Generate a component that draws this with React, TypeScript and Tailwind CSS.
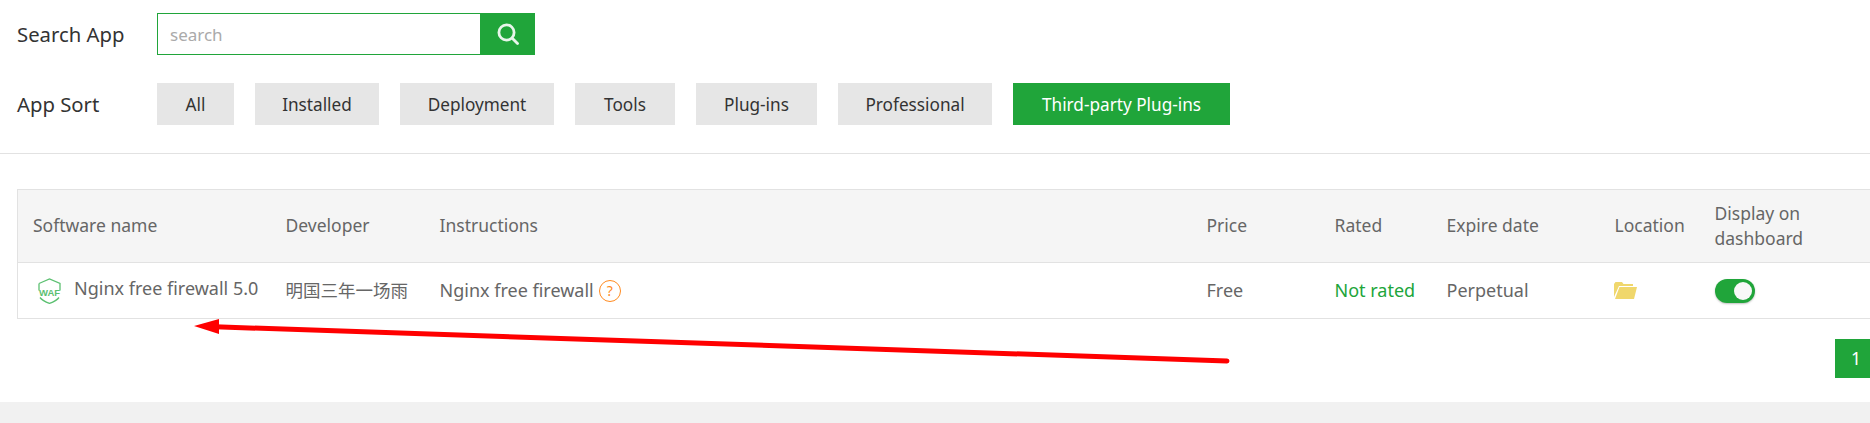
const sorts = [
  { label: "All", w: "w-[77px]" },
  { label: "Installed", w: "w-[124px]" },
  { label: "Deployment", w: "w-[154px]" },
  { label: "Tools", w: "w-[100px]" },
  { label: "Plug-ins", w: "w-[121px]" },
  { label: "Professional", w: "w-[154px]" },
];

const th = "px-[15px] pb-[1px] font-normal text-left align-middle text-[#666] leading-[25px]";
const td = "px-[15px] align-middle text-[#666] whitespace-nowrap text-[18px]";

function WafIcon() {
  return (
    <svg width="25" height="26" viewBox="0 0 25 26" className="shrink-0" fill="none">
      <path d="M2 5.5 L12.5 1 L23 5.5 V12.5" stroke="#5cc071" strokeWidth="1.3" />
      <path d="M2 5.5 V12.5" stroke="#5cc071" strokeWidth="1.3" />
      <path d="M3 19.5 Q5.5 23 12.5 25.4 Q19.5 23 22 19.5" stroke="#5cc071" strokeWidth="1.3" />
      <text x="12.5" y="18" textAnchor="middle" fontSize="9.5" fontWeight="700" fill="#5cc071" fontFamily="'Liberation Sans', sans-serif">WAF</text>
    </svg>
  );
}

function FolderIcon() {
  return (
    <svg width="23" height="17" viewBox="0 0 23 17" fill="#f0d76c" className="-ml-px">
      <path d="M0 15 V2 L1.5 0 H8 L9.5 2 H19 V4 H5 Z" />
      <path d="M5.5 5 H23 L20 17 H1 Z" />
    </svg>
  );
}

export default function App() {
  return (
    <div className="relative h-[423px] w-full overflow-hidden bg-white font-['Noto_Sans','Noto_Sans_CJK_SC',sans-serif] text-[17.5px] text-[#333]">
      <div className="h-[402px]">
        <div className="flex items-center pt-[13px] pl-[17px]">
          <span className="w-[140px] text-[20.3px]">Search App</span>
          <div className="flex h-[42px] w-[378px]">
            <input
              placeholder="search"
              className="h-full flex-1 min-w-0 border border-[#20a53a] px-3 text-[17px] outline-none placeholder:text-[#aaa]"
            />
            <button className="flex h-full w-[54px] items-center justify-center bg-[#20a53a]">
              <svg width="22" height="22" viewBox="0 0 22 22" fill="none" stroke="#e8f5ea" strokeWidth="2.8" strokeLinecap="round">
                <circle cx="9.5" cy="9.5" r="7.6" />
                <path d="M15.5 15.5 L20.5 20.5" />
              </svg>
            </button>
          </div>
        </div>

        <div className="mt-[28px] flex items-center pl-[17px]">
          <span className="w-[140px] text-[20.3px]">App Sort</span>
          <div className="flex gap-[21px] text-[17.2px]">
            {sorts.map((s) => (
              <div key={s.label} className={`flex h-[42px] items-center justify-center bg-[#e6e6e6] pt-px ${s.w}`}>
                {s.label}
              </div>
            ))}
            <div className="flex h-[42px] w-[217px] items-center justify-center bg-[#20a53a] pt-px text-white">
              Third-party Plug-ins
            </div>
          </div>
        </div>

        <div className="mt-[28px] border-b border-[#e2e2e2]" />

        <div className="ml-[17px] mt-[35px] w-[1860px]">
          <table className="w-full table-fixed border-collapse border border-[#e2e2e2]">
            <colgroup>
              <col className="w-[253px]" />
              <col className="w-[154px]" />
              <col className="w-[767px]" />
              <col className="w-[128px]" />
              <col className="w-[112px]" />
              <col className="w-[168px]" />
              <col className="w-[100px]" />
              <col />
            </colgroup>
            <thead>
              <tr className="h-[73px] border-b border-[#e2e2e2] bg-[#f5f5f5]">
                <th className={th}>Software name</th>
                <th className={th}>Developer</th>
                <th className={th}>Instructions</th>
                <th className={th}>Price</th>
                <th className={th}>Rated</th>
                <th className={th}>Expire date</th>
                <th className={th}>Location</th>
                <th className={th}>
                  Display on
                  <br />
                  dashboard
                </th>
              </tr>
            </thead>
            <tbody>
              <tr className="h-[56px]">
                <td className={td}>
                  <div className="flex items-center gap-[12px] pl-[4px]">
                    <WafIcon />
                    <span className="-mt-[4px]">Nginx free firewall 5.0</span>
                  </div>
                </td>
                <td className={`${td} !text-[17.5px]`}>明国三年一场雨</td>
                <td className={td}>
                  <div className="flex items-center gap-[5px]">
                    <span>Nginx free firewall</span>
                    <span className="flex h-[22px] w-[22px] items-center justify-center rounded-full border border-[#ff8a1f] text-[14px] text-[#ff8a1f]">
                      ?
                    </span>
                  </div>
                </td>
                <td className={td}>Free</td>
                <td className={`${td} !text-[#20a53a]`}>Not rated</td>
                <td className={td}>Perpetual</td>
                <td className={td}>
                  <FolderIcon />
                </td>
                <td className={td}>
                  <div className="flex h-[24px] w-[40px] items-center justify-end rounded-full bg-[#20a53a] pr-[3px] shadow-[0_1px_2px_rgba(0,0,0,0.25)]">
                    <div className="h-[18px] w-[18px] rounded-full bg-[#f8f8f8]" />
                  </div>
                </td>
              </tr>
            </tbody>
          </table>

          <div className="mt-[20px] flex justify-end">
            <div className="flex h-[39px] w-[42px] items-center justify-center bg-[#20a53a] text-white">1</div>
          </div>
        </div>
      </div>
      <div className="h-[21px] bg-[#f1f1f1]" />

      <svg className="pointer-events-none absolute inset-0" width="1870" height="423" fill="none">
        <path d="M215 326.8 L1227 361" stroke="#ff0000" strokeWidth="5" strokeLinecap="round" />
        <path d="M194 326 L219 319 L219 334 Z" fill="#ff0000" />
      </svg>
    </div>
  );
}
